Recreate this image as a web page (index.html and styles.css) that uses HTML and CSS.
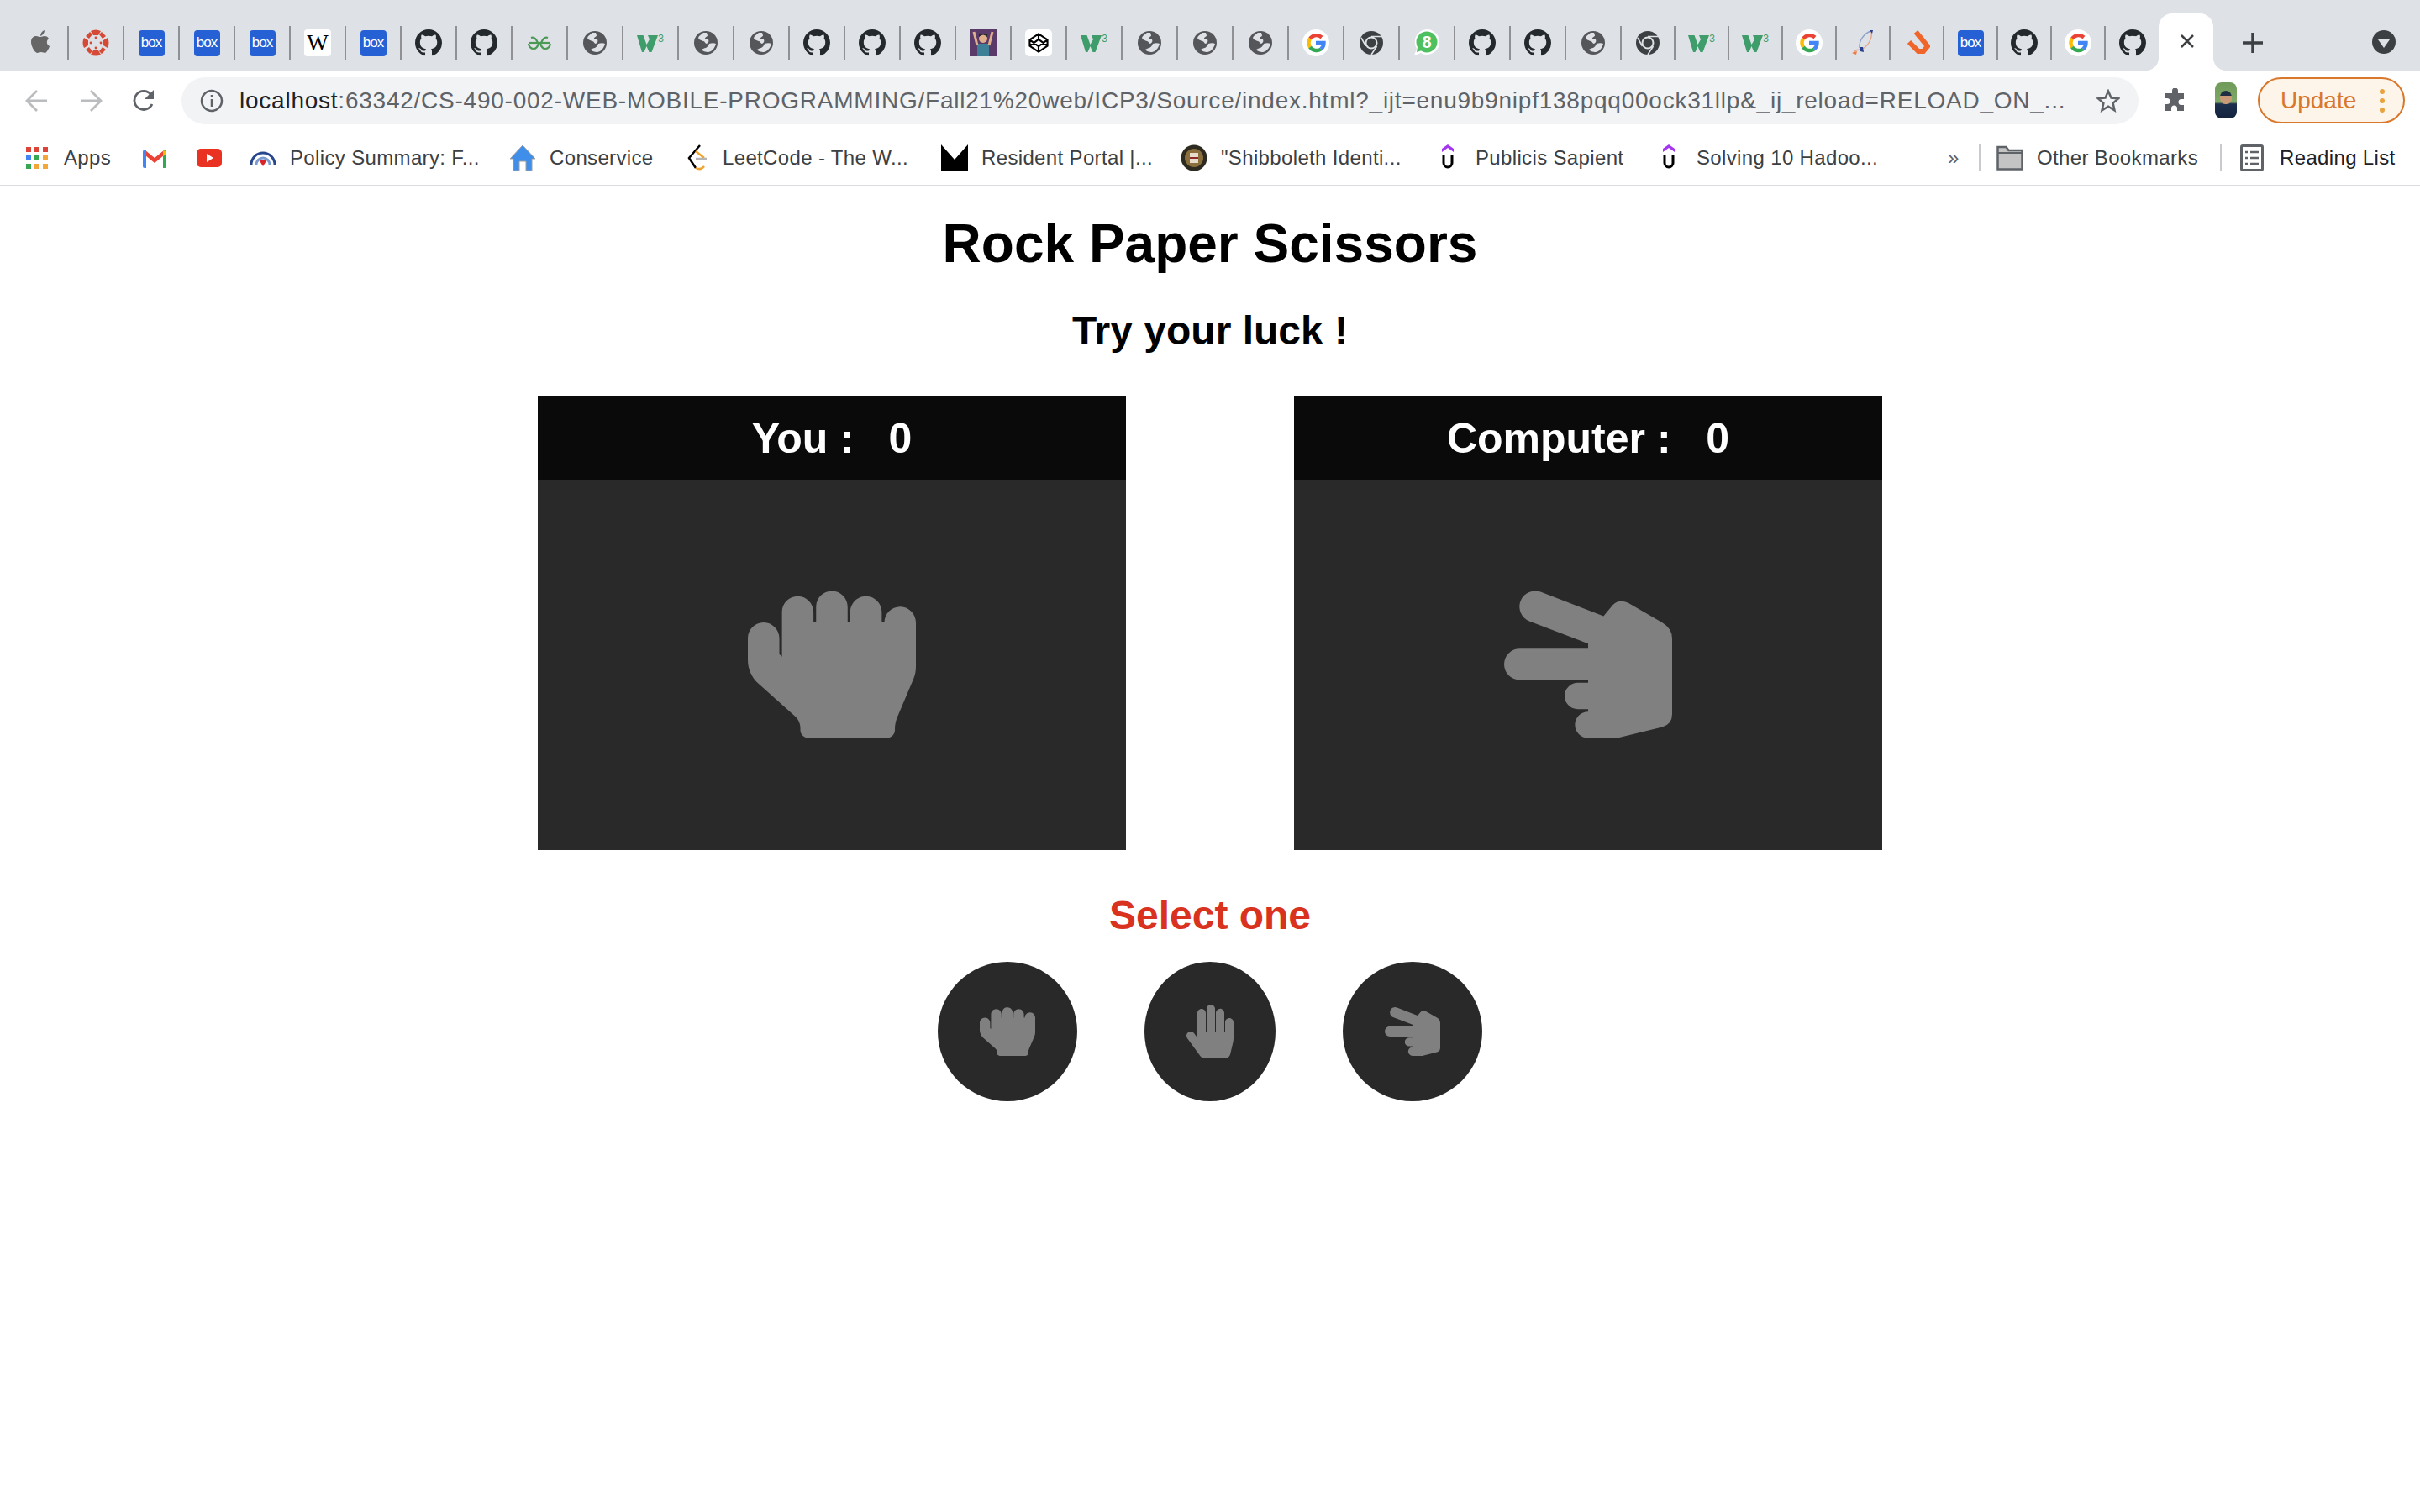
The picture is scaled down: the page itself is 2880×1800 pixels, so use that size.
FILE: index.html
```html
<!DOCTYPE html>
<html>
<head>
    <title>Rock Paper Scissors</title>
    <link rel="stylesheet" href="styles.css">
</head>
<body>
    <svg class="defs" width="0" height="0">
        <symbol id="i-gh" viewBox="0 0 16 16"><path fill="#24292e" d="M8 0C3.58 0 0 3.58 0 8c0 3.54 2.29 6.53 5.47 7.59.4.07.55-.17.55-.38 0-.19-.01-.82-.01-1.49-2.01.37-2.53-.49-2.69-.94-.09-.23-.48-.94-.82-1.13-.28-.15-.68-.52-.01-.53.63-.01 1.08.58 1.23.82.72 1.21 1.87.87 2.33.66.07-.52.28-.87.51-1.07-1.78-.2-3.64-.89-3.64-3.95 0-.87.31-1.59.82-2.15-.08-.2-.36-1.02.08-2.12 0 0 .67-.21 2.2.82.64-.18 1.32-.27 2-.27.68 0 1.36.09 2 .27 1.53-1.04 2.2-.82 2.2-.82.44 1.1.16 1.92.08 2.12.51.56.82 1.27.82 2.15 0 3.07-1.87 3.75-3.65 3.95.29.25.54.73.54 1.48 0 1.07-.01 1.93-.01 2.2 0 .21.15.46.55.38A8.013 8.013 0 0016 8c0-4.42-3.58-8-8-8z"/></symbol>
        <symbol id="i-globe" viewBox="0 0 32 32"><circle cx="16" cy="16" r="14" fill="#54565a"/><path fill="#dee1e6" d="M13 4c-2 2-5 3-6 6 1 3 4 3 6 4 2 0 2 3 4 3 2-1 3-3 2-5l-4-1c0-2 3-2 3-4l-1-3zM20 17c3-1 6-1 8 0-1 4-3 7-6 9l-3 1c-3 0-7-1-8-3 2-1 3-2 5-2 2-1 3-3 4-5z"/></symbol>
        <symbol id="i-g" viewBox="0 0 32 32"><circle cx="16" cy="16" r="16" fill="#fff"/><g fill="none" stroke-width="4.4"><path stroke="#ea4335" d="M9 11a9.5 9.5 0 0 1 14-1.5"/><path stroke="#fbbc05" d="M9 11a9.5 9.5 0 0 0 0 10"/><path stroke="#34a853" d="M9 21a9.5 9.5 0 0 0 13 2.5"/><path stroke="#4285f4" d="M22 23.5A9.5 9.5 0 0 0 25.5 16H16"/></g></symbol>
        <symbol id="i-chrome" viewBox="0 0 32 32"><circle cx="16" cy="16" r="14" fill="#3c4043"/><circle cx="16" cy="16" r="7.5" fill="#dee1e6"/><circle cx="16" cy="16" r="5.5" fill="#3c4043"/><path fill="none" stroke="#dee1e6" stroke-width="1.6" d="M16 8.5h12M9.5 20 4 10M22.500 20 16 30"/></symbol>
        <symbol id="i-apple" viewBox="0 0 32 32"><path fill="#666" d="M16 9c2 0 3-1 5-1 2.500 0 4 1 5 3-3 2-3 7 1 9-1 3-3 7-5 8-2 0-3-1-5-1s-3 1-5 1c-3-1-7-8-7-13 0-5 3-7 6-7 2 0 3 1 5 1zM16 8c0-3 2-6 5-7 0 3-2 6-5 7z"/></symbol>
        <symbol id="i-w3" viewBox="0 0 32 32"><path fill="#3f9c6b" d="M0 7H7.500L11.500 18 15 12 13 7H25L17.500 27H14.500L11.500 20 8.500 27H6z"/></symbol>
        <symbol id="i-canvas" viewBox="0 0 32 32"><g fill="#d64a35"><path d="M10 2q6-3 12 0l-3 5h-6zM10 30q6 3 12 0l-3-5h-6zM2 10q-3 6 0 12l5-3v-6zM30 10q3 6 0 12l-5-3v-6z"/><circle cx="16" cy="10" r="1.400"/><circle cx="16" cy="22" r="1.400"/><circle cx="10" cy="16" r="1.400"/><circle cx="22" cy="16" r="1.400"/><path d="M23 3l5 5-4 3-4-5zM9 3L4 8l4 3 4-5zM23 29l5-5-4-3-4 5zM9 29l-5-5 4-3 4 5z"/></g></symbol>
        <symbol id="i-gfg" viewBox="0 0 32 32"><g fill="none" stroke="#4a9a56" stroke-width="2.200"><path d="M3 16h26"/><path d="M18 16c2-5 5-7 8-6M14 16c-2-5-5-7-8-6"/><path d="M3 17c1 5 3 6 6 6s5-2 6-7M29 17c-1 5-3 6-6 6s-5-2-6-7"/></g></symbol>
        <symbol id="i-codepen" viewBox="0 0 32 32"><g fill="none" stroke="#000" stroke-width="2.600" stroke-linejoin="round"><path d="M16 3 29 11.500V20.500L16 29 3 20.500V11.500zM16 3v7.500M16 21.500V29M3 11.500 16 21 29 11.500M3 20.500 16 11 29 20.500"/></g></symbol>
        <symbol id="i-avatar" viewBox="0 0 32 32"><rect width="32" height="32" fill="#5a3a68"/><rect x="9" y="17" width="14" height="15" fill="#3d7f96"/><circle cx="16" cy="11" r="5" fill="#e0b08c"/><path fill="#2b2b2b" d="M11 9q5-5 10 0v-3h-10z"/><path stroke="#e0b08c" stroke-width="3" d="M9 19 5 3M23 19 27 3"/></symbol>
        <symbol id="i-wa" viewBox="0 0 32 32"><path fill="#fff" d="M16 0a15 15 0 0 1 0 30c-3 0-5-1-7-2l-8 3 3-8A15 15 0 0 1 16 0z"/><circle cx="16" cy="15" r="12.500" fill="#4fc05f"/><path fill="#4fc05f" d="M5 21l-1 6 6-2z"/></symbol>
        <symbol id="i-rocket" viewBox="0 0 32 32"><g fill="none" stroke-width="1.400"><path stroke="#8fa0c8" d="M26 2C18 4 11 13 12 22"/><path stroke="#e7a488" d="M26 2c2 8-4 20-14 22-5 0-7 3-7 5"/></g><path fill="#25408f" d="M12 21l4 0 1 6-4-1zM24 1l4 0-1 4z"/><path fill="#ef7a3e" d="M3 28l6-2-1 4z"/></symbol>
        <symbol id="i-orange" viewBox="0 0 32 32"><path fill="none" stroke="#f0652a" stroke-width="6" d="M15 3l14 17-5 6h-6L7 15"/></symbol>
        <symbol id="i-u" viewBox="0 0 14 32"><path fill="#a435f0" d="M7 0l7 5v4L7 4 0 9V5z"/><path fill="none" stroke="#000" stroke-width="3" d="M2 13v9a5 5 0 0 0 10 0v-9"/></symbol>
        <symbol id="rock" viewBox="0 0 512 512"><path d="M464.8 80c-26.9-.4-48.8 21.200-48.8 48h-8V96.800c0-26.300-20.900-48.300-47.200-48.800-26.900-.4-48.800 21.200-48.800 48v32h-8V80.800c0-26.300-20.900-48.300-47.200-48.800-26.900-.4-48.800 21.200-48.800 48v48h-8V96.800c0-26.300-20.900-48.300-47.200-48.800-26.900-.4-48.800 21.200-48.800 48v136l-8-7.100v-48.100c0-26.300-20.900-48.300-47.200-48.800C21.900 127.600 0 149.200 0 176v66.700c0 27.400 11.700 53.500 32.200 71.800l111.700 99.300c10.200 9.100 16.100 22.200 16.100 35.900v6.300c0 13.300 10.700 24 24 24h240c13.300 0 24-10.700 24-24v-2.900c0-12.800 2.600-25.500 7.600-37.300l49-115.500c5-11.800 7.400-24.400 7.400-37.100V128.800c0-26.300-21-48.400-47.200-48.800z"/></symbol>
        <symbol id="paper" viewBox="0 0 448 512"><path d="M408.781 128.007C386.356 127.578 368 146.360 368 168.790V256h-8V79.790c0-22.430-18.356-41.212-40.781-40.783C297.488 39.423 280 57.169 280 79v177h-8V40.790C272 18.360 253.644-.422 231.219.007 209.488.423 192 18.169 192 40v216h-8V80.790c0-22.430-18.356-41.212-40.781-40.783C121.488 40.423 104 58.169 104 80v235.992l-31.648-43.519c-12.993-17.866-38.009-21.817-55.877-8.823-17.865 12.994-21.815 38.010-8.822 55.877l125.601 172.705A48 48 0 0 0 172.073 512h197.590c22.274 0 41.622-15.324 46.724-37.006l26.508-112.660a192.011 192.011 0 0 0 5.104-43.975V168c.001-21.831-17.487-39.577-39.218-39.993z"/></symbol>
        <symbol id="scissors" viewBox="120 92.500 600 600"><path d="M420 318 210 238A56 56 0 0 1 252 134L475 220 508 180Q530 158 562 172L685 243Q720 264 720 300V570Q720 605 685 616L525 655H420A47 47 0 0 1 420 561V552H383A47 47 0 0 1 383 458H420V448H176A56 56 0 0 1 176 336H420Z"/></symbol>
    </svg>

    <div class="browser">
        <div class="tabstrip">
            <div class="tab"><svg class="fav"><use href="#i-apple"/></svg></div>
            <div class="tab"><svg class="fav"><use href="#i-canvas"/></svg></div>
            <div class="tab"><span class="box-logo">box</span></div>
            <div class="tab"><span class="box-logo">box</span></div>
            <div class="tab"><span class="box-logo">box</span></div>
            <div class="tab"><span class="wiki-logo">W</span></div>
            <div class="tab"><span class="box-logo">box</span></div>
            <div class="tab"><svg class="fav"><use href="#i-gh"/></svg></div>
            <div class="tab"><svg class="fav"><use href="#i-gh"/></svg></div>
            <div class="tab"><svg class="fav"><use href="#i-gfg"/></svg></div>
            <div class="tab"><svg class="fav"><use href="#i-globe"/></svg></div>
            <div class="tab"><span class="w3-logo"><svg class="fav"><use href="#i-w3"/></svg><sup>3</sup></span></div>
            <div class="tab"><svg class="fav"><use href="#i-globe"/></svg></div>
            <div class="tab"><svg class="fav"><use href="#i-globe"/></svg></div>
            <div class="tab"><svg class="fav"><use href="#i-gh"/></svg></div>
            <div class="tab"><svg class="fav"><use href="#i-gh"/></svg></div>
            <div class="tab"><svg class="fav"><use href="#i-gh"/></svg></div>
            <div class="tab"><svg class="fav"><use href="#i-avatar"/></svg></div>
            <div class="tab"><span class="white-tile"><svg class="fav-sm"><use href="#i-codepen"/></svg></span></div>
            <div class="tab"><span class="w3-logo"><svg class="fav"><use href="#i-w3"/></svg><sup>3</sup></span></div>
            <div class="tab"><svg class="fav"><use href="#i-globe"/></svg></div>
            <div class="tab"><svg class="fav"><use href="#i-globe"/></svg></div>
            <div class="tab"><svg class="fav"><use href="#i-globe"/></svg></div>
            <div class="tab"><svg class="fav"><use href="#i-g"/></svg></div>
            <div class="tab"><svg class="fav"><use href="#i-chrome"/></svg></div>
            <div class="tab"><span class="wa-logo"><svg class="fav"><use href="#i-wa"/></svg><b>8</b></span></div>
            <div class="tab"><svg class="fav"><use href="#i-gh"/></svg></div>
            <div class="tab"><svg class="fav"><use href="#i-gh"/></svg></div>
            <div class="tab"><svg class="fav"><use href="#i-globe"/></svg></div>
            <div class="tab narrow"><svg class="fav"><use href="#i-chrome"/></svg></div>
            <div class="tab narrow"><span class="w3-logo"><svg class="fav"><use href="#i-w3"/></svg><sup>3</sup></span></div>
            <div class="tab narrow"><span class="w3-logo"><svg class="fav"><use href="#i-w3"/></svg><sup>3</sup></span></div>
            <div class="tab narrow"><svg class="fav"><use href="#i-g"/></svg></div>
            <div class="tab narrow"><svg class="fav"><use href="#i-rocket"/></svg></div>
            <div class="tab narrow"><svg class="fav"><use href="#i-orange"/></svg></div>
            <div class="tab narrow"><span class="box-logo">box</span></div>
            <div class="tab narrow"><svg class="fav"><use href="#i-gh"/></svg></div>
            <div class="tab narrow"><svg class="fav"><use href="#i-g"/></svg></div>
            <div class="tab narrow last"><svg class="fav"><use href="#i-gh"/></svg></div>
            <div class="tab-active">
                <svg class="tab-icon" viewBox="0 0 20 20"><path d="M3 3l14 14M17 3 3 17"/></svg>
            </div>
            <svg class="new-tab" viewBox="0 0 24 24"><path d="M12 0v24M0 12h24"/></svg>
            <div class="tab-menu"><span></span></div>
        </div>

        <div class="toolbar">
            <div class="nav-btn"><svg viewBox="0 0 28 28" class="nav-icon off"><path d="M26 14H3M14 2 2 14l12 12"/></svg></div>
            <div class="nav-btn"><svg viewBox="0 0 28 28" class="nav-icon off"><path d="M2 14h23M14 2l12 12-12 12"/></svg></div>
            <div class="nav-btn"><svg viewBox="0 0 28 28" class="nav-icon"><path d="M23 18A11 11 0 1 1 21.500 6.500"/><path class="solid" d="M25 1v11H14z"/></svg></div>
            <div class="omnibox">
                <svg class="info" viewBox="0 0 28 28"><circle cx="14" cy="14" r="12"/><path d="M14 12v9M14 7v3"/></svg>
                <div class="url"><span class="host">localhost</span>:63342/CS-490-002-WEB-MOBILE-PROGRAMMING/Fall21%20web/ICP3/Source/index.html?_ijt=enu9b9nipf138pqq00ock31llp&amp;_ij_reload=RELOAD_ON_...</div>
                <svg class="star" viewBox="0 0 28 28"><path d="M14 2.500l3.500 8 8.500.8-6.400 5.600 1.900 8.400L14 20.800l-7.500 4.500 1.900-8.400L2 11.300l8.500-.8z"/></svg>
            </div>
            <svg class="puzzle" viewBox="0 0 30 30"><path d="M11 3a3.500 3.500 0 0 1 7 0v3h7v7h-3a3.500 3.500 0 0 0 0 7h3v7h-8v-3a3.500 3.500 0 0 0-7 0v3H2v-8h3a3.500 3.500 0 0 0 0-7H2V6h9z"/></svg>
            <div class="profile"><div class="profile-head"></div></div>
            <div class="update">Update<span class="dots"><i></i><i></i><i></i></span></div>
        </div>

        <div class="bookmarks">
            <div class="bm apps-item"><svg class="bm-icon apps" viewBox="0 0 26 26"><g><rect width="6" height="6" fill="#db4437"/><rect x="10" width="6" height="6" fill="#db4437"/><rect x="20" width="6" height="6" fill="#db4437"/><rect y="10" width="6" height="6" fill="#4285f4"/><rect x="10" y="10" width="6" height="6" fill="#34a853"/><rect x="20" y="10" width="6" height="6" fill="#f4a736"/><rect y="20" width="6" height="6" fill="#34a853"/><rect x="10" y="20" width="6" height="6" fill="#f4a736"/><rect x="20" y="20" width="6" height="6" fill="#f4a736"/></g></svg><span>Apps</span></div>
            <div class="bm"><svg class="bm-icon gmail" viewBox="0 0 28 24"><path fill="#ea4335" d="M3 3 14 12 25 3v6L14 18 3 9z"/><path fill="#4285f4" d="M0 5q0-4 4-2v21H2q-2 0-2-2z"/><path fill="#34a853" d="M28 5q0-4-4-2v21h2q2 0 2-2z"/><path fill="#fbbc05" d="M24 3l4 1v3l-4 3z"/></svg></div>
            <div class="bm"><svg class="bm-icon yt" viewBox="0 0 30 32"><rect width="30" height="22" y="5" rx="5" fill="#ea3223"/><path fill="#fff" d="M12 11l8 5-8 5z"/></svg></div>
            <div class="bm"><svg class="bm-icon" viewBox="0 0 32 24"><path fill="none" stroke="#27478f" stroke-width="3" d="M2 20A14 14 0 0 1 30 20"/><path fill="none" stroke="#7b9bd0" stroke-width="3" d="M8 20a8 8 0 0 1 16 0"/><path fill="#d8232a" d="M11 14h10l-5 8z"/></svg><span>Policy Summary: F...</span></div>
            <div class="bm"><svg class="bm-icon" viewBox="0 0 32 32"><path fill="#3f8ee9" stroke="#9aa0a6" stroke-width="1" d="M16 1 31 17h-4v14H20V20h-8v11H5V17H1z"/></svg><span>Conservice</span></div>
            <div class="bm"><svg class="bm-icon leet" viewBox="0 0 26 32"><path fill="none" stroke="#000" stroke-width="2.500" d="M16 1 3 16l8 12"/><path fill="none" stroke="#f0a32f" stroke-width="2.500" d="M11 8l10 8M11 28q6 3 10-2"/><path stroke="#b5b5b5" stroke-width="2.500" d="M11 17h13"/></svg><span>LeetCode - The W...</span></div>
            <div class="bm"><svg class="bm-icon" viewBox="0 0 32 32"><path d="M0 0 16 18 32 0v32H0z"/></svg><span>Resident Portal |...</span></div>
            <div class="bm"><svg class="bm-icon" viewBox="0 0 32 32"><circle cx="16" cy="16" r="15.500" fill="#2d2a1f"/><circle cx="16" cy="16" r="11" fill="#8a6f3d"/><rect x="11" y="10" width="10" height="12" fill="#e8dccb"/><path stroke="#8e2a2a" stroke-width="2" d="M11 16h10"/></svg><span>"Shibboleth Identi...</span></div>
            <div class="bm"><svg class="bm-icon u" viewBox="0 0 14 32"><use href="#i-u"/></svg><span>Publicis Sapient</span></div>
            <div class="bm"><svg class="bm-icon u" viewBox="0 0 14 32"><use href="#i-u"/></svg><span>Solving 10 Hadoo...</span></div>
            <div class="bm more">»</div>
            <div class="bm-sep"></div>
            <div class="bm"><svg class="bm-icon" viewBox="0 0 32 30"><path fill="#c4c4c4" stroke="#5f6368" stroke-width="2.500" d="M1.500 2h10l3 4h16v22.500h-29z"/><path stroke="#5f6368" stroke-width="2" d="M2 9h29"/></svg><span>Other Bookmarks</span></div>
            <div class="bm-sep"></div>
            <div class="bm reading"><svg class="bm-icon list" viewBox="0 0 28 32"><rect x="1.500" y="1.500" width="25" height="29" rx="1.500" fill="none" stroke="#5f6368" stroke-width="3"/><path stroke="#5f6368" stroke-width="2.500" d="M6 9h3M12 9h10M6 16h3M12 16h10M6 23h3M12 23h10"/></svg><span>Reading List</span></div>
        </div>
    </div>

    <div class="game">
        <h1>Rock Paper Scissors</h1>
        <h2>Try your luck !</h2>

        <div class="boards">
            <div class="board">
                <div class="board-head">You : &nbsp; 0</div>
                <div class="board-body"><svg class="hand"><use href="#rock"/></svg></div>
            </div>
            <div class="board">
                <div class="board-head">Computer : &nbsp; 0</div>
                <div class="board-body"><svg class="hand"><use href="#scissors"/></svg></div>
            </div>
        </div>

        <h3>Select one</h3>

        <div class="picks">
            <div class="pick"><svg class="pick-icon"><use href="#rock"/></svg></div>
            <div class="pick"><svg class="pick-icon paper"><use href="#paper"/></svg></div>
            <div class="pick"><svg class="pick-icon"><use href="#scissors"/></svg></div>
        </div>
    </div>
</body>
</html>
```

FILE: styles.css
```css
body {
    margin: 0;
    background-color: #ffffff;
    font-family: "Liberation Sans", Arial, sans-serif;
}
.defs {
    display: block;
    height: 0;
}

/* browser chrome */
.tabstrip {
    display: flex;
    align-items: flex-start;
    box-sizing: border-box;
    height: 84px;
    padding: 31px 0 0 16px;
    background-color: #dee1e6;
}
.tab {
    display: flex;
    align-items: center;
    justify-content: center;
    box-sizing: border-box;
    flex: 0 0 66px;
    height: 40px;
    border-right: 2px solid #8f9194;
}
.tab.narrow {
    flex-basis: 64px;
}
.tab.last {
    flex-basis: 63px;
    border-right: none;
}
.fav {
    width: 32px;
    height: 32px;
    flex: none;
}
.fav-sm {
    width: 26px;
    height: 26px;
}
.box-logo {
    display: flex;
    align-items: center;
    justify-content: center;
    width: 31px;
    height: 31px;
    border-radius: 4px;
    background-color: #2560d4;
    color: #ffffff;
    font-size: 17px;
    letter-spacing: -1px;
}
.wiki-logo {
    display: flex;
    align-items: center;
    justify-content: center;
    width: 32px;
    height: 32px;
    border-radius: 4px;
    background-color: #ffffff;
    color: #000000;
    font-family: "Liberation Serif", serif;
    font-size: 27px;
}
.white-tile {
    display: flex;
    align-items: center;
    justify-content: center;
    width: 32px;
    height: 32px;
    border-radius: 5px;
    background-color: #ffffff;
}
.w3-logo {
    position: relative;
    display: block;
    width: 32px;
    height: 32px;
}
.w3-logo sup {
    position: absolute;
    top: 5px;
    right: 0;
    color: #3f9c6b;
    font-size: 12px;
    line-height: 12px;
}
.wa-logo {
    position: relative;
    display: block;
    width: 32px;
    height: 32px;
}
.wa-logo b {
    position: absolute;
    top: 4px;
    left: 0;
    width: 32px;
    color: #ffffff;
    font-size: 20px;
    line-height: 22px;
    text-align: center;
}
.tab-active {
    position: relative;
    display: flex;
    align-items: center;
    justify-content: center;
    box-sizing: border-box;
    flex: 0 0 65px;
    height: 68px;
    margin-top: -15px;
    padding-left: 3px;
    border-radius: 16px 16px 0 0;
    background-color: #ffffff;
}
.tab-active::before,
.tab-active::after {
    content: "";
    position: absolute;
    bottom: 0;
    width: 16px;
    height: 16px;
}
.tab-active::before {
    left: -16px;
    background: radial-gradient(circle at 0 0, #dee1e6 16px, #ffffff 16.5px);
}
.tab-active::after {
    right: -16px;
    background: radial-gradient(circle at 100% 0, #dee1e6 16px, #ffffff 16.5px);
}
.tab-icon {
    width: 20px;
    height: 20px;
    margin-top: -2px;
    fill: none;
    stroke: #3c4043;
    stroke-width: 2.500;
}
.new-tab {
    width: 24px;
    height: 24px;
    margin: 8px 0 0 35px;
    fill: none;
    stroke: #3c4043;
    stroke-width: 3.500;
}
.tab-menu {
    display: flex;
    align-items: center;
    justify-content: center;
    width: 28px;
    height: 28px;
    margin: 5px 0 0 130px;
    border-radius: 50%;
    background-color: #3c4043;
}
.tab-menu span {
    width: 0;
    height: 0;
    margin-top: 3px;
    border-left: 7px solid transparent;
    border-right: 7px solid transparent;
    border-top: 10px solid #dee1e6;
}

.toolbar {
    display: flex;
    align-items: flex-start;
    box-sizing: border-box;
    height: 81px;
    padding: 8px 0 0 12px;
}
.nav-btn {
    display: flex;
    align-items: center;
    justify-content: center;
    width: 64px;
    height: 56px;
}
.nav-icon {
    width: 28px;
    height: 28px;
    fill: none;
    stroke: #5f6368;
    stroke-width: 2.800;
}
.nav-icon.off {
    stroke: #babcbe;
}
.nav-icon .solid {
    fill: #5f6368;
    stroke: none;
}
.omnibox {
    display: flex;
    align-items: center;
    box-sizing: border-box;
    width: 2329px;
    height: 56px;
    margin-left: 12px;
    padding: 0 22px;
    border-radius: 28px;
    background-color: #f1f3f4;
}
.info {
    flex: none;
    width: 28px;
    height: 28px;
    fill: none;
    stroke: #5f6368;
    stroke-width: 2.500;
}
.url {
    flex: 1;
    margin-left: 19px;
    color: #5f6368;
    font-size: 28px;
    letter-spacing: .76px;
    white-space: nowrap;
    overflow: hidden;
}
.host {
    color: #202124;
}
.star {
    flex: none;
    width: 28px;
    height: 28px;
    fill: none;
    stroke: #5f6368;
    stroke-width: 2.500;
}
.puzzle {
    flex: none;
    width: 30px;
    height: 30px;
    margin: 13px 0 0 29px;
    fill: #5f6368;
}
.profile {
    flex: none;
    width: 26px;
    height: 43px;
    margin: 6px 0 0 32px;
    border-radius: 8px;
    overflow: hidden;
    background: linear-gradient(180deg, #6f9a58 0, #7ea868 55%, #1d2f4d 60%, #13233e 100%);
}
.profile-head {
    width: 14px;
    height: 16px;
    margin: 10px 0 0 6px;
    border-radius: 50% 50% 45% 45%;
    background: linear-gradient(180deg, #1f2e44 0, #1f2e44 35%, #c99a78 36%);
}
.update {
    display: flex;
    align-items: center;
    box-sizing: border-box;
    flex: none;
    width: 175px;
    height: 55px;
    margin-left: 25px;
    padding-left: 25px;
    border: 2.500px solid #d9772b;
    border-radius: 28px;
    background-color: #fdf4ea;
    color: #d9772b;
    font-size: 28px;
}
.dots {
    display: flex;
    flex-direction: column;
    gap: 5px;
    margin-left: 28px;
}
.dots i {
    width: 6px;
    height: 6px;
    border-radius: 50%;
    background-color: #e8a33d;
}

.bookmarks {
    display: grid;
    grid-template-columns: 139px 63px 64px 309px 210px 304px 285px 311px 263px 339px 37px 21px 266px 24px auto;
    align-items: center;
    box-sizing: border-box;
    height: 57px;
    padding: 0 0 9px 31px;
    border-bottom: 2px solid #dadce0;
    color: #3c4043;
    font-size: 24px;
    letter-spacing: .35px;
}
.bm {
    display: flex;
    align-items: center;
    gap: 16px;
    white-space: nowrap;
}
.bm.apps-item {
    gap: 19px;
}
.bm-icon {
    flex: none;
    width: 32px;
    height: 32px;
}
.bm-icon.apps {
    width: 26px;
    height: 26px;
}
.bm-icon.gmail {
    width: 28px;
}
.bm-icon.leet {
    width: 28px;
}
.bm-icon.list {
    width: 28px;
    margin-right: 3px;
}
.bm-icon.u {
    width: 14px;
    margin-right: 10px;
}
.bm.more {
    color: #5f6368;
}
.bm-sep {
    width: 2px;
    height: 32px;
    background-color: #c8cacd;
}
.bm.reading {
    color: #202124;
}

/* the game itself */
.game {
    text-align: center;
    color: #000000;
}
h1 {
    margin: 31px 0 39px;
    font-size: 64px;
}
h2 {
    margin: 0 0 51px;
    font-size: 48px;
}
.boards {
    display: flex;
    justify-content: center;
    gap: 200px;
}
.board {
    width: 700px;
}
.board-head {
    display: flex;
    align-items: center;
    justify-content: center;
    height: 100px;
    background-color: #0a0a0a;
    color: #ffffff;
    font-size: 50px;
    font-weight: bold;
    white-space: pre;
}
.board-body {
    display: flex;
    align-items: center;
    justify-content: center;
    box-sizing: border-box;
    height: 440px;
    padding-bottom: 3px;
    background-color: #292929;
}
.hand {
    width: 200px;
    height: 200px;
    fill: #808080;
}
h3 {
    margin: 50px 0 28px;
    color: #d9321f;
    font-size: 48px;
}
.picks {
    display: flex;
    justify-content: center;
    gap: 80px;
}
.pick {
    display: flex;
    align-items: center;
    justify-content: center;
    padding: 50px;
    border-radius: 50%;
    background-color: #292929;
}
.pick-icon {
    width: 66px;
    height: 66px;
    fill: #808080;
}
.pick-icon.paper {
    width: 56px;
}
```
